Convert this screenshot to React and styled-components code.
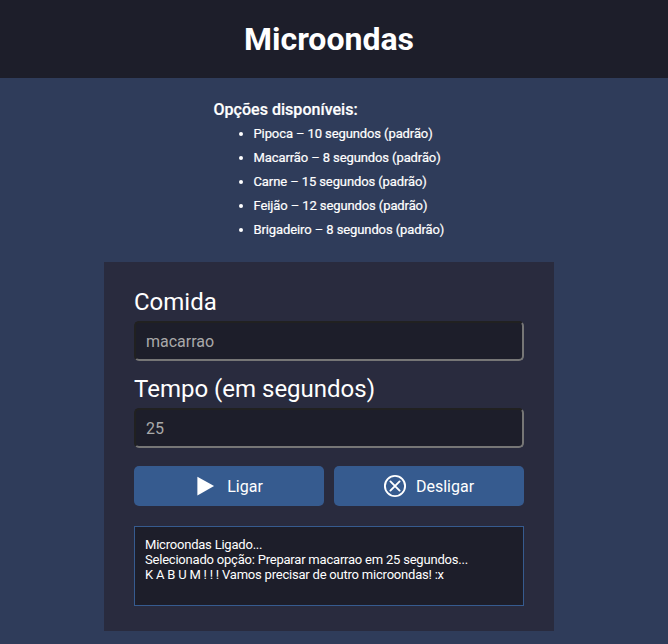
import React from "react";
import styled, { createGlobalStyle } from "styled-components";

const GlobalStyle = createGlobalStyle`
  * { box-sizing: border-box; margin: 0; padding: 0; }
  body { background: #2f3c5a; color: #fff; font-family: Roboto, sans-serif; }
  input, button { font-family: inherit; }
`;

const Page = styled.div`
  height: 644px;
  overflow: hidden;
  display: flex;
  flex-direction: column;
`;

const Header = styled.header`
  height: 78px;
  flex: none;
  display: flex;
  align-items: center;
  justify-content: center;
  padding-right: 10px;
  background: #1d1e2a;
`;

const Title = styled.h1`
  font-size: 32px;
  font-weight: 700;
`;

const Options = styled.section`
  width: 232px;
  height: 142px;
  margin: 20px 0 22px 213.5px;
`;

const OptionsTitle = styled.h2`
  font-size: 16px;
  font-weight: 500;
  line-height: 24px;
  letter-spacing: 0.03px;
  -webkit-text-stroke: 0.2px #fff;
`;

const OptionList = styled.ul`
  padding-left: 40px;
`;

const Option = styled.li`
  font-size: 13px;
  font-weight: 400;
  line-height: 24px;
  letter-spacing: -0.1px;
  -webkit-text-stroke: 0.2px #fff;
  white-space: nowrap;
`;

const Panel = styled.main`
  width: 450px;
  height: 369px;
  margin-left: 104px;
  padding: 26px 30px 25px;
  background: #292b3e;
`;

const Label = styled.label`
  display: block;
  font-size: 24px;
  line-height: 28px;
  margin-bottom: 5px;
`;

const Field = styled.input`
  display: block;
  width: 100%;
  height: 40px;
  margin-bottom: 14px;
  padding: 0 10px;
  color: #a9a9a9;
  background: #1d1e2a;
  border: 2px inset #767676;
  border-radius: 5px;
  font-size: 16px;
`;

const Actions = styled.div`
  display: grid;
  grid-template-columns: 1fr 1fr;
  gap: 10px;
  margin: 18px 0 20px;
`;

const Action = styled.button`
  height: 40px;
  display: flex;
  align-items: center;
  justify-content: center;
  gap: 9px;
  padding-right: 1px;
  color: #fff;
  background: #365b8f;
  border: 0;
  border-radius: 5px;
  font-size: 16px;
`;

const Log = styled.output`
  display: block;
  height: 80px;
  padding: 10px;
  background: #1d1e2a;
  border: 1px solid #365b8f;
  font-size: 13px;
  line-height: 15px;
  letter-spacing: -0.21px;
`;

const foods = [
  ["Pipoca", 10],
  ["Macarrão", 8],
  ["Carne", 15],
  ["Feijão", 12],
  ["Brigadeiro", 8],
];

export default function App() {
  return (
    <Page>
      <GlobalStyle />
      <Header><Title>Microondas</Title></Header>
      <Options>
        <OptionsTitle>Opções disponíveis:</OptionsTitle>
        <OptionList>
          {foods.map(([name, time]) => (
            <Option key={name}>{`${name} – ${time} segundos (padrão)`}</Option>
          ))}
        </OptionList>
      </Options>
      <Panel>
        <Label htmlFor="food">Comida</Label>
        <Field id="food" defaultValue="macarrao" />
        <Label htmlFor="time">Tempo (em segundos)</Label>
        <Field id="time" defaultValue="25" />
        <Actions>
          <Action>
            <svg width="24" height="24" viewBox="0 0 24 24"><path d="M3.4 2.7L20.1 12L3.4 21.5Z" fill="#fff" /></svg>
            Ligar
          </Action>
          <Action>
            <svg width="24" height="24" viewBox="0 0 24 24" fill="none" stroke="#fff" strokeWidth="1.9" strokeLinecap="round">
              <circle cx="12" cy="12" r="10.1" /><path d="M7.4 7.4L16.6 16.6M16.6 7.4L7.4 16.6" />
            </svg>
            Desligar
          </Action>
        </Actions>
        <Log>
          Microondas Ligado...<br />
          Selecionado opção: Preparar macarrao em 25 segundos...<br />
          K A B U M ! ! ! Vamos precisar de outro microondas! :x
        </Log>
      </Panel>
    </Page>
  );
}
